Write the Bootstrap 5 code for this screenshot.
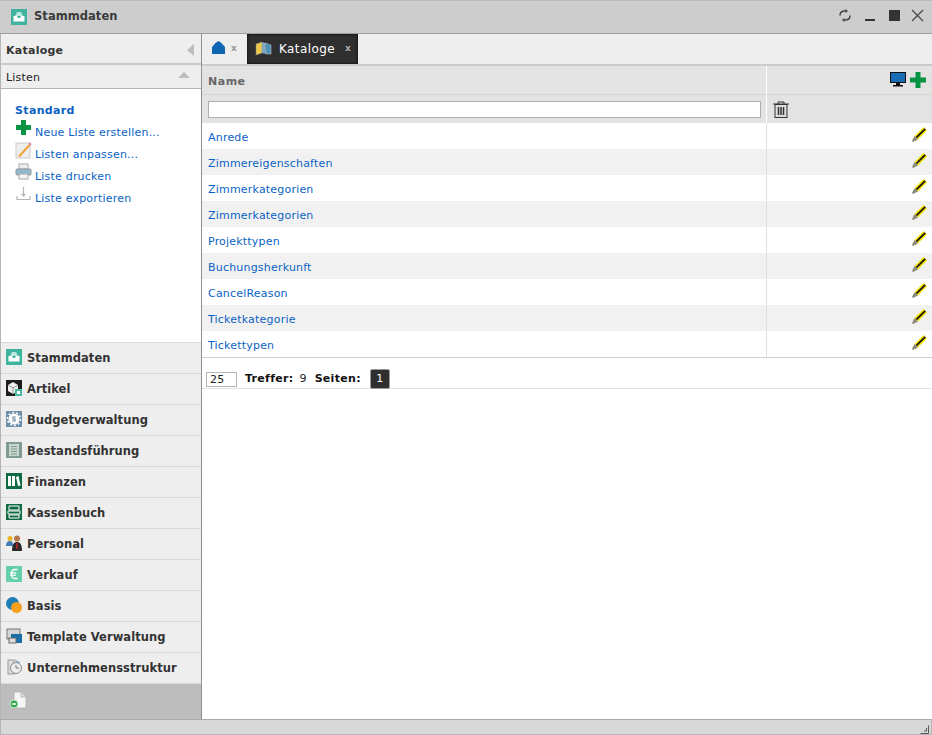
<!DOCTYPE html>
<html lang="de">
<head>
  <meta charset="UTF-8">
  <meta name="viewport" content="width=device-width, initial-scale=1.0">
  <title>Stammdaten</title>
  <link href="https://cdn.jsdelivr.net/npm/bootstrap@5.3.0/dist/css/bootstrap.min.css" rel="stylesheet">
  <style>
    html, body { height: 735px; overflow: hidden; }
    body { background: #fff; font-family: "DejaVu Sans", sans-serif; font-size: 11px; color: #333; letter-spacing: .2px; }
    a { color: #0a62c4; text-decoration: none; }
    svg { display: block; flex: none; }
    .app-window { height: 735px; width: 932px; }
    .title-bar { height: 34px; background: #cdcdcd; border-top: 1px solid #bcbcbc; border-bottom: 1px solid #9e9e9e; padding: 0 11px; gap: 7px; }
    .title-text { font-size: 11.5px; font-weight: 700; color: #3a3a3a; letter-spacing: .05px; }
    .win-tools { gap: 11px; margin-right: -3px; margin-bottom: 3px; }
    .win-tools .win-min { margin-left: 2px; margin-right: -1px; }
    .work-area { height: 685px; }
    .side-panel { width: 202px; border-left: 1px solid #b5b5b5; border-right: 1px solid #8f8f8f; }
    .side-head { height: 31px; background: #eee; border-bottom: 2px solid #c9c9c9; padding: 0 5px; }
    .side-head b { font-size: 11px; letter-spacing: .25px; color: #333; padding-top: 6px; }
    .side-sub { height: 24px; background: #eee; border-bottom: 1px solid #b5b5b5; padding: 0 5px; color: #222; }
    .side-sub span:first-child { padding-top: 4px; }
    .arrow-left { width: 0; height: 0; border: 6px solid transparent; border-left-width: 0; border-right: 7px solid #bdbdbd; margin: 2px 2px 0 0; }
    .arrow-up { width: 0; height: 0; border: 6px solid transparent; border-top-width: 0; border-bottom: 6px solid #bdbdbd; margin: 0 6px 3px 0; }
    .side-body { flex: 1; background: #fff; padding: 15px 0 0 14px; }
    .side-body .list-title { font-weight: 700; font-size: 11px; color: #0a62c4; letter-spacing: .35px; line-height: 14px; margin-bottom: 2px; }
    .side-item { height: 22px; gap: 3px; }
    .side-item svg { margin-top: -1px; }
    .side-item a { padding-top: 5px; }
    .acc-row { height: 31px; background: #eee; border-top: 1px solid #d8d8d8; padding: 1px 0 0 5px; gap: 5px; font-weight: 700; font-size: 11.5px; color: #333; letter-spacing: .05px; margin: 0; }
    .acc-row svg { margin-bottom: 3px; }
    .side-foot { height: 36px; background: #bdbdbd; border-top: 1px solid #d8d8d8; padding: 7px 0 0 8px; }
    .main-panel { flex: 1; min-width: 0; background: #fff; }
    .tab-strip { height: 32px; background: #eee; border-bottom: 2px solid #cbcbcb; }
    .tab-home { width: 45px; padding-left: 10px; gap: 6px; height: 30px; }
    .tab-home svg { margin-bottom: 4px; }
    .tab-x { font-size: 9px; font-weight: 700; color: #999; }
    .tab-active { height: 30px; width: 111px; background: #2f2f2f; color: #fff; padding-left: 8px; font-size: 12px; letter-spacing: .4px; box-shadow: inset 0 0 3px #000; }
    .tab-active svg { margin: 0 7px 2px 0; }
    .tab-active .tab-x { color: #aaa; margin-left: 10px; }
    .grid-tbl { table-layout: fixed; width: 730px; margin: 0; border-collapse: separate; border-spacing: 0; }
    .grid-tbl td, .grid-tbl th { padding: 0 6px; font-weight: 400; vertical-align: middle; background: transparent; box-shadow: none; border: 0; color: inherit; }
    .grid-tbl .col-tools { width: 166px; border-left: 1px solid #e0e0e0; padding: 0 6px; }
    .head-row th { height: 29px; background: #e3e3e3; border-bottom: 1px solid #d8d3cb; font-weight: 700; color: #666; letter-spacing: .5px; }
    .head-row th span { display: block; padding-top: 4px; }
    .head-row .col-tools, .filter-row .col-tools { border-left-color: #fff; }
    .filter-row td { height: 28px; background: #e3e3e3; }
    .filter-box { display: block; width: 553px; height: 17px; border: 1px solid #aeaeae; background: #fff; padding: 0; border-radius: 0; }
    .data-row td { height: 26px; }
    .data-row a { display: block; padding-top: 4px; }
    .data-row:nth-child(even) td { background: #f1f1f1; }
    .tool-cell { justify-content: flex-end; }
    .data-row .tool-cell { margin-right: -1px; }
    .data-row .tool-cell svg { margin-top: -3px; }
    .pager { height: 32px; border-top: 1px solid #cfcdc8; border-bottom: 1px solid #e2e2e2; padding: 12px 0 0 4px; color: #222; gap: 8px; }
    .size-box { width: 31px; height: 15px; border: 1px solid #b5b5b5; font-size: 11px; line-height: 13px; padding-left: 3px; }
    .pager b { color: #111; letter-spacing: .3px; }
    .hit-count { margin-left: 6px; }
    .page-num { width: 20px; height: 20px; margin-left: 1px; background: #2f2f2f; color: #fff; border: 1px solid #999; border-radius: 2px; }
    .status-bar { height: 16px; background: #d8d8d8; border: 1px solid #b5b5b5; border-top-color: #aaa; padding-right: 2px; }
  </style>
</head>
<body>
  <div class="app-window d-flex flex-column">
    <div class="title-bar d-flex align-items-center">
      <svg width="16" height="16" viewBox="0 0 16 16"><rect width="16" height="16" fill="#3eb39d"/><path d="M4 7 6 3h4l2 4z" fill="#b9e8de"/><path d="M2.500 7h3.500l1 2h2l1-2h3.500v5.500h-11z" fill="#fff"/></svg>
      <span class="title-text">Stammdaten</span>
      <div class="win-tools d-flex align-items-center ms-auto">
        <svg width="14" height="13" viewBox="0 0 14 13" fill="none" stroke="#444" stroke-width="1.500"><path d="M2 6.500C2 3.500 4 2 7 2h2"/><path d="M12 6.500C12 9.500 10 11 7 11H5"/><path d="M7.500 .5 9.500 2 7.500 3.500M6.500 9.500 4.500 11l2 1.500" stroke-width="1"/></svg>
        <svg width="10" height="12" viewBox="0 0 10 12" class="win-min"><rect y="9" width="10" height="2" fill="#333"/></svg>
        <svg width="11" height="11" viewBox="0 0 11 11" class="ms-1"><rect width="11" height="11" fill="#333"/></svg>
        <svg width="13" height="13" viewBox="0 0 13 13" stroke="#444" stroke-width="1.200"><path d="M1 1l11 11M12 1 1 12"/></svg>
      </div>
    </div>

    <div class="work-area d-flex">
      <div class="side-panel d-flex flex-column">
        <div class="side-head d-flex align-items-center justify-content-between"><b>Kataloge</b><span class="arrow-left"></span></div>
        <div class="side-sub d-flex align-items-center justify-content-between"><span>Listen</span><span class="arrow-up"></span></div>
        <div class="side-body">
          <div class="list-title">Standard</div>
          <div class="side-item d-flex"><svg width="17" height="17" viewBox="0 0 17 17"><path d="M6 1h5v5h5v5h-5v5H6v-5H1V6h5z" fill="#069443"/></svg><a href="#">Neue Liste erstellen...</a></div>
          <div class="side-item d-flex"><svg width="17" height="18" viewBox="0 0 17 18"><rect x="1" y="2" width="14" height="15" fill="#eee" stroke="#ccc"/><path d="M3 15 14 3l1.500 1.500L5 16z" fill="#f2a53a"/><path d="M14 2l2 2" stroke="#e58cb5" stroke-width="2"/></svg><a href="#">Listen anpassen...</a></div>
          <div class="side-item d-flex"><svg width="17" height="17" viewBox="0 0 17 17"><rect x="4" y="1" width="9" height="5" fill="#eee" stroke="#aaa"/><rect x="1" y="6" width="15" height="6" rx="1" fill="#8fb9cd" stroke="#999"/><rect x="4" y="11" width="9" height="5" fill="#f4f4f4" stroke="#aaa"/></svg><a href="#">Liste drucken</a></div>
          <div class="side-item d-flex"><svg width="17" height="17" viewBox="0 0 17 17" fill="none" stroke="#b5b5b5" stroke-width="1.200"><path d="M2 11v3.500h13V11"/><path d="M8.500 2v9M6.500 9l2 2 2-2"/></svg><a href="#">Liste exportieren</a></div>
        </div>

        <div class="acc-row d-flex align-items-center"><svg width="16" height="16" viewBox="0 0 16 16"><rect width="16" height="16" fill="#3eb39d"/><path d="M4 7 6 3h4l2 4z" fill="#b9e8de"/><path d="M2.500 7h3.500l1 2h2l1-2h3.500v5.500h-11z" fill="#fff"/></svg>Stammdaten</div>
        <div class="acc-row d-flex align-items-center"><svg width="16" height="16" viewBox="0 0 16 16"><rect width="16" height="16" fill="#1c1c1c"/><path d="M2 5l5-3 5 3v6l-5 3-5-3z" fill="#eee"/><path d="M7 8v6M2 5l5 3 5-3" stroke="#999" fill="none"/><rect x="9" y="9" width="7" height="7" fill="#4bb8a8"/><rect x="11" y="11" width="3" height="3" fill="#fff"/></svg>Artikel</div>
        <div class="acc-row d-flex align-items-center"><svg width="16" height="16" viewBox="0 0 16 16"><rect width="16" height="16" fill="#6f8fa8"/><circle cx="8" cy="8" r="5.500" fill="#fff"/><circle cx="8" cy="8" r="6.500" fill="none" stroke="#fff" stroke-width="1.500" stroke-dasharray="2 2"/><path d="M10 6H7v2h2v2H6" fill="none" stroke="#6f8fa8" stroke-width="1.200"/></svg>Budgetverwaltung</div>
        <div class="acc-row d-flex align-items-center"><svg width="16" height="16" viewBox="0 0 16 16"><rect width="16" height="16" fill="#7f9c90"/><rect x="3" y="2" width="10" height="12" fill="#c9d6d0"/><path d="M5 4.500h6M5 7h6M5 9.500h6M5 12h6" stroke="#7f9c90"/></svg>Bestandsführung</div>
        <div class="acc-row d-flex align-items-center"><svg width="16" height="16" viewBox="0 0 16 16"><rect width="16" height="16" fill="#0f6b43"/><path d="M2 3h3v10H2zM6 3h3v10H6zM10 4l2.500-1 2 9.500-2.500.5z" fill="#fff"/></svg>Finanzen</div>
        <div class="acc-row d-flex align-items-center"><svg width="16" height="16" viewBox="0 0 16 16"><rect width="16" height="16" fill="#0f6b43"/><path d="M3 2h10v4H3zM2 7h12v3H2zM3 11h10v3H3z" fill="none" stroke="#fff"/></svg>Kassenbuch</div>
        <div class="acc-row d-flex align-items-center"><svg width="16" height="16" viewBox="0 0 16 16"><circle cx="4" cy="3.500" r="2.500" fill="#e6b422"/><path d="M0 11c0-4 2-5 4-5s3 1 3 5z" fill="#3f7fb5"/><circle cx="11" cy="3.500" r="3" fill="#b5754a"/><path d="M6 16c0-7 2-9 5-9s5 2 5 9z" fill="#2a2a2a"/><path d="M11 8v6" stroke="#c22" stroke-width="1.500"/></svg>Personal</div>
        <div class="acc-row d-flex align-items-center"><svg width="16" height="16" viewBox="0 0 16 16"><rect width="16" height="16" fill="#63cfac"/><path d="M11.500 3.500H9C6.500 3.500 5.500 5.500 5.500 8s1 4.500 3.500 4.500h2.500M4 6.800h6M4 9.200h6" fill="none" stroke="#fff" stroke-width="1.300"/></svg>Verkauf</div>
        <div class="acc-row d-flex align-items-center"><svg width="16" height="16" viewBox="0 0 16 16"><circle cx="6.500" cy="6.500" r="6.500" fill="#1f7fb5"/><circle cx="10.500" cy="10.500" r="5.500" fill="#f7a11f"/></svg>Basis</div>
        <div class="acc-row d-flex align-items-center"><svg width="16" height="16" viewBox="0 0 16 16"><rect x="1" y="1" width="13" height="10" fill="#d5d5d5" stroke="#777"/><rect x="5" y="6" width="11" height="9" fill="#1a6fa8"/><rect x="3" y="10" width="7" height="5" fill="#ddd" stroke="#666"/></svg>Template Verwaltung</div>
        <div class="acc-row d-flex align-items-center"><svg width="16" height="16" viewBox="0 0 16 16"><rect x="2" y="1" width="6" height="14" fill="#ddd" stroke="#999"/><circle cx="10" cy="9" r="5.500" fill="#eee" stroke="#888"/><path d="M10 6v3h3" stroke="#777" fill="none"/><path d="M9 1l5 3" stroke="#5a9bd0"/></svg>Unternehmensstruktur</div>
        <div class="side-foot"><svg width="18" height="18" viewBox="0 0 18 18"><path d="M5 1h7l5 5v11H5z" fill="#f5f5f5" stroke="#aaa" stroke-width=".7"/><path d="M12 1v5h5" fill="#ddd" stroke="#aaa" stroke-width=".7"/><circle cx="5" cy="13" r="4" fill="#31a84f" stroke="#cfe8d5"/><path d="M3 13h4" stroke="#fff" stroke-width="1.500"/></svg></div>
      </div>

      <div class="main-panel d-flex flex-column">
        <div class="tab-strip d-flex">
          <div class="tab-home d-flex align-items-center"><svg width="13" height="13" viewBox="0 0 13 13"><path d="M0 6 3.500 2 6.500 0l3 2 3.500 4v7H0z" fill="#0f66b3"/></svg><span class="tab-x">x</span></div>
          <div class="tab-active d-flex align-items-center"><svg width="17" height="15" viewBox="0 0 17 15"><path d="M1 3l6-2v11l-6 2z" fill="#e8c94a" stroke="#888" stroke-width=".5"/><path d="M7 1l3 1 1 11-4-1z" fill="#7ea6c2"/><path d="M10 2l6 2v9l-5 0z" fill="#4d90b8" stroke="#ccc" stroke-width=".5"/></svg>Kataloge<span class="tab-x">x</span></div>
        </div>
        <table class="table grid-tbl">
          <thead>
            <tr class="head-row"><th><span>Name</span></th><th class="col-tools"><div class="d-flex tool-cell gap-1"><svg width="16" height="15" viewBox="0 0 16 15"><rect width="16" height="11" fill="#111"/><rect x="1" y="1" width="14" height="9" fill="#1a6db5"/><rect x="6" y="11" width="4" height="2" fill="#111"/><rect x="3" y="13" width="10" height="1.500" fill="#111"/></svg><svg width="16" height="16" viewBox="0 0 16 16"><path d="M5.500 0h5v5.500H16v5h-5.500V16h-5v-5.500H0v-5h5.500z" fill="#069443"/></svg></div></th></tr>
            <tr class="filter-row"><td><input class="filter-box" type="text"></td><td class="col-tools"><svg width="16" height="17" viewBox="0 0 16 17"><path d="M0 3h16M5 3V1h6v2" fill="none" stroke="#333"/><rect x="2" y="3.500" width="12" height="13" fill="#ddd" stroke="#333"/><path d="M5.500 6v8M8 6v8M10.500 6v8" stroke="#333" stroke-width="1.500"/></svg></td></tr>
          </thead>
          <tbody id="katalogRows"></tbody>
        </table>
        <div class="pager d-flex align-items-center" id="pagerRow">
          <div class="size-box">25</div>
          <div><b>Treffer:</b><span class="hit-count">9</span></div>
          <b>Seiten:</b>
          <div class="page-num d-flex align-items-center justify-content-center">1</div>
        </div>
      </div>
    </div>

    <div class="status-bar d-flex align-items-end justify-content-end">
      <svg width="9" height="9" viewBox="0 0 9 9" fill="none" stroke="#555"><path d="M.5 8.500h8V.5M4 6h2.500V3"/></svg>
    </div>
  </div>

  <script>
    const names = ["Anrede", "Zimmereigenschaften", "Zimmerkategorien", "Zimmerkategorien", "Projekttypen", "Buchungsherkunft", "CancelReason", "Ticketkategorie", "Tickettypen"];
    const pencil = '<svg width="15" height="15" viewBox="0 0 15 15"><path d="M11.500 0 15 3.500 6 12.500 2.500 9z" fill="#f5e000"/><path d="M13.200 1.800 4.300 10.700" stroke="#111" stroke-width="1.700"/><path d="M2.500 9 6 12.500 1 15 0 14z" fill="#8a8a7a"/></svg>';
    document.getElementById("katalogRows").innerHTML = names.map(n =>
      `<tr class="data-row"><td><a href="#">${n}</a></td><td class="col-tools"><div class="d-flex tool-cell">${pencil}</div></td></tr>`
    ).join("");
  </script>
  <script src="https://cdn.jsdelivr.net/npm/bootstrap@5.3.0/dist/js/bootstrap.bundle.min.js"></script>
</body>
</html>
